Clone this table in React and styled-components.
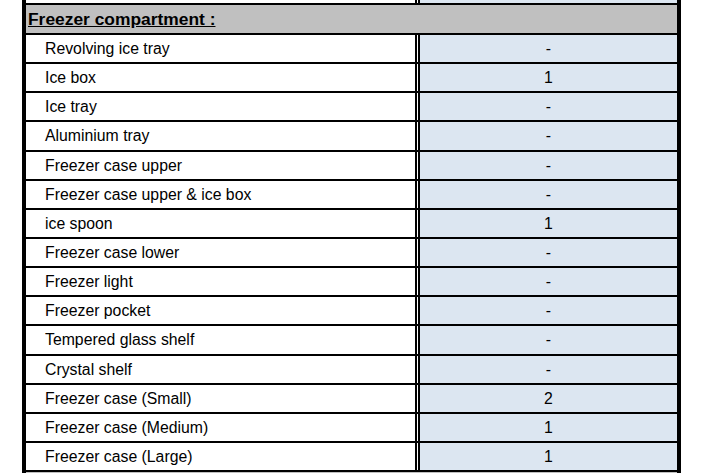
import React from "react";
import styled, { createGlobalStyle } from "styled-components";

const GlobalStyle = createGlobalStyle`
  html, body {
    margin: 0;
    padding: 0;
    background: #ffffff;
    overflow: hidden;
  }
  body {
    font-family: "Liberation Sans", Arial, sans-serif;
    color: #000;
  }
`;

const Sheet = styled.div`
  margin-left: 22px;
  width: 659px;
  border-left: 4px solid #000;
  border-right: 4px solid #000;
  box-sizing: border-box;
  height: 473px;
  overflow: hidden;
`;

const Row = styled.div`
  display: grid;
  grid-template-columns: 394px 1fr;
  height: ${(p) => p.$h || 27.15}px;
  border-bottom: 2px solid #000;
`;

const NameCell = styled.div`
  border-right: 5px double #000;
  padding-left: 19px;
  padding-top: 1px;
  display: flex;
  align-items: center;
  font-size: 15.8px;
  background: #fff;
  white-space: nowrap;
  overflow: hidden;
`;

const ValueCell = styled.div`
  background: #dce6f1;
  padding-top: 1px;
  display: flex;
  align-items: center;
  justify-content: center;
  font-size: 15.8px;
`;

const SectionRow = styled.div`
  height: 28px;
  background: #c0c0c0;
  border-bottom: 2px solid #000;
  display: flex;
  align-items: center;
  padding-left: 2px;
  font-size: 17.4px;
  font-weight: bold;
  text-decoration: underline;
`;

const items = [
  ["Revolving ice tray", "-"],
  ["Ice box", "1"],
  ["Ice tray", "-"],
  ["Aluminium tray", "-"],
  ["Freezer case upper", "-"],
  ["Freezer case upper & ice box", "-"],
  ["ice spoon", "1"],
  ["Freezer case lower", "-"],
  ["Freezer light", "-"],
  ["Freezer pocket", "-"],
  ["Tempered glass shelf", "-"],
  ["Crystal shelf", "-"],
  ["Freezer case (Small)", "2"],
  ["Freezer case (Medium)", "1"],
  ["Freezer case (Large)", "1"],
];

export default function App() {
  return (
    <>
      <GlobalStyle />
      <Sheet>
        <Row $h={3}>
          <NameCell />
          <ValueCell />
        </Row>
        <SectionRow>Freezer compartment :</SectionRow>
        {items.map(([name, qty]) => (
          <Row key={name}>
            <NameCell>{name}</NameCell>
            <ValueCell>{qty}</ValueCell>
          </Row>
        ))}
        <SectionRow />
      </Sheet>
    </>
  );
}
